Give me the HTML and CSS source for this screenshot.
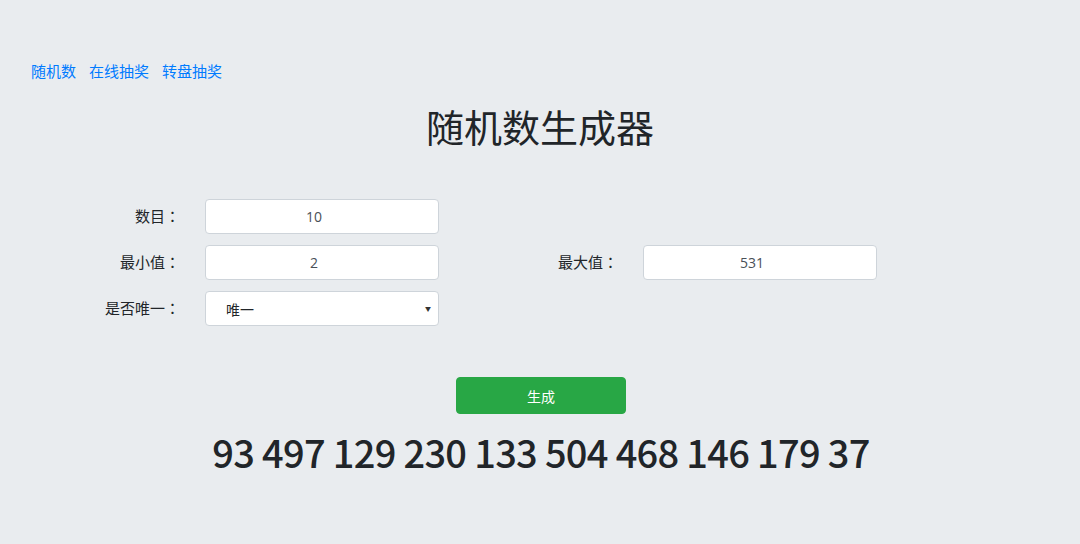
FILE: index.html
```html
<!DOCTYPE html>
<html lang="zh-CN">
<head>
<meta charset="utf-8">
<title>随机数生成器</title>
<link rel="stylesheet" href="styles.css">
</head>
<body>
<nav class="nav">
  <a href="#">随机数</a>
  <a href="#">在线抽奖</a>
  <a href="#">转盘抽奖</a>
</nav>
<h1 class="title">随机数生成器</h1>
<form class="form">
  <label class="label">数目<span class="colon" lang="ja">：</span></label>
  <input class="field" type="text" value="10">
  <span></span><span></span>
  <label class="label">最小值<span class="colon" lang="ja">：</span></label>
  <input class="field" type="text" value="2">
  <label class="label">最大值<span class="colon" lang="ja">：</span></label>
  <input class="field" type="text" value="531">
  <label class="label">是否唯一<span class="colon" lang="ja">：</span></label>
  <div class="select">唯一<span class="caret">▼</span></div>
</form>
<div class="actions">
  <button class="btn" type="button">生成</button>
</div>
<div class="result">93 497 129 230 133 504 468 146 179 37</div>
</body>
</html>
```
FILE: styles.css
```css
html, body {
  margin: 0;
  padding: 0;
}
body {
  background: #e9ecef;
  font-family: "Noto Sans CJK SC", "Open Sans", sans-serif;
  color: #212529;
  width: 1080px;
  height: 544px;
  overflow: hidden;
}
.nav {
  padding: 61px 0 0 31px;
  display: flex;
  gap: 13px;
  font-size: 15px;
  line-height: 20px;
}
.nav a {
  color: #007bff;
  text-decoration: none;
}
.title {
  margin: 17px 0 0;
  text-align: center;
  font-size: 38px;
  line-height: 56px;
  font-weight: 400;
  color: #212529;
}
.form {
  margin-top: 45px;
  display: grid;
  grid-template-columns: 180px 234px 154px 234px;
  column-gap: 25px;
  row-gap: 11px;
  align-items: center;
  justify-content: start;
}
.label {
  text-align: right;
  font-size: 15px;
  line-height: 20px;
  color: #212529;
  margin-top: -1px;
}
.colon {
  font-family: "Noto Sans CJK JP", sans-serif;
}
.field, .select {
  box-sizing: border-box;
  height: 35px;
  border: 1px solid #ced4da;
  border-radius: 4px;
  background: #fff;
  font-family: "Open Sans", "Noto Sans CJK SC", sans-serif;
  font-size: 14px;
  color: #495057;
  text-align: center;
  margin: 0;
  padding: 0 20px 0 4px;
  width: 234px;
}
.select {
  display: flex;
  align-items: center;
  justify-content: space-between;
  text-align: left;
  padding: 0 7px 0 20px;
  font-family: "Noto Sans CJK SC", sans-serif;
  color: #212529;
}
.caret {
  font-size: 6px;
  color: #333;
}
.actions {
  margin-top: 51px;
  display: flex;
  justify-content: center;
  padding-left: 2px;
}
.btn {
  width: 170px;
  height: 37px;
  background: #28a745;
  border: 1px solid #28a745;
  border-radius: 4px;
  color: #fff;
  font-family: "Noto Sans CJK SC", sans-serif;
  font-size: 14px;
}
.result {
  margin-top: 13px;
  text-align: center;
  padding-left: 2px;
  font-family: "Noto Sans CJK SC", sans-serif;
  font-weight: 500;
  font-size: 38px;
  letter-spacing: -0.7px;
  line-height: 50px;
  color: #212529;
}
```
